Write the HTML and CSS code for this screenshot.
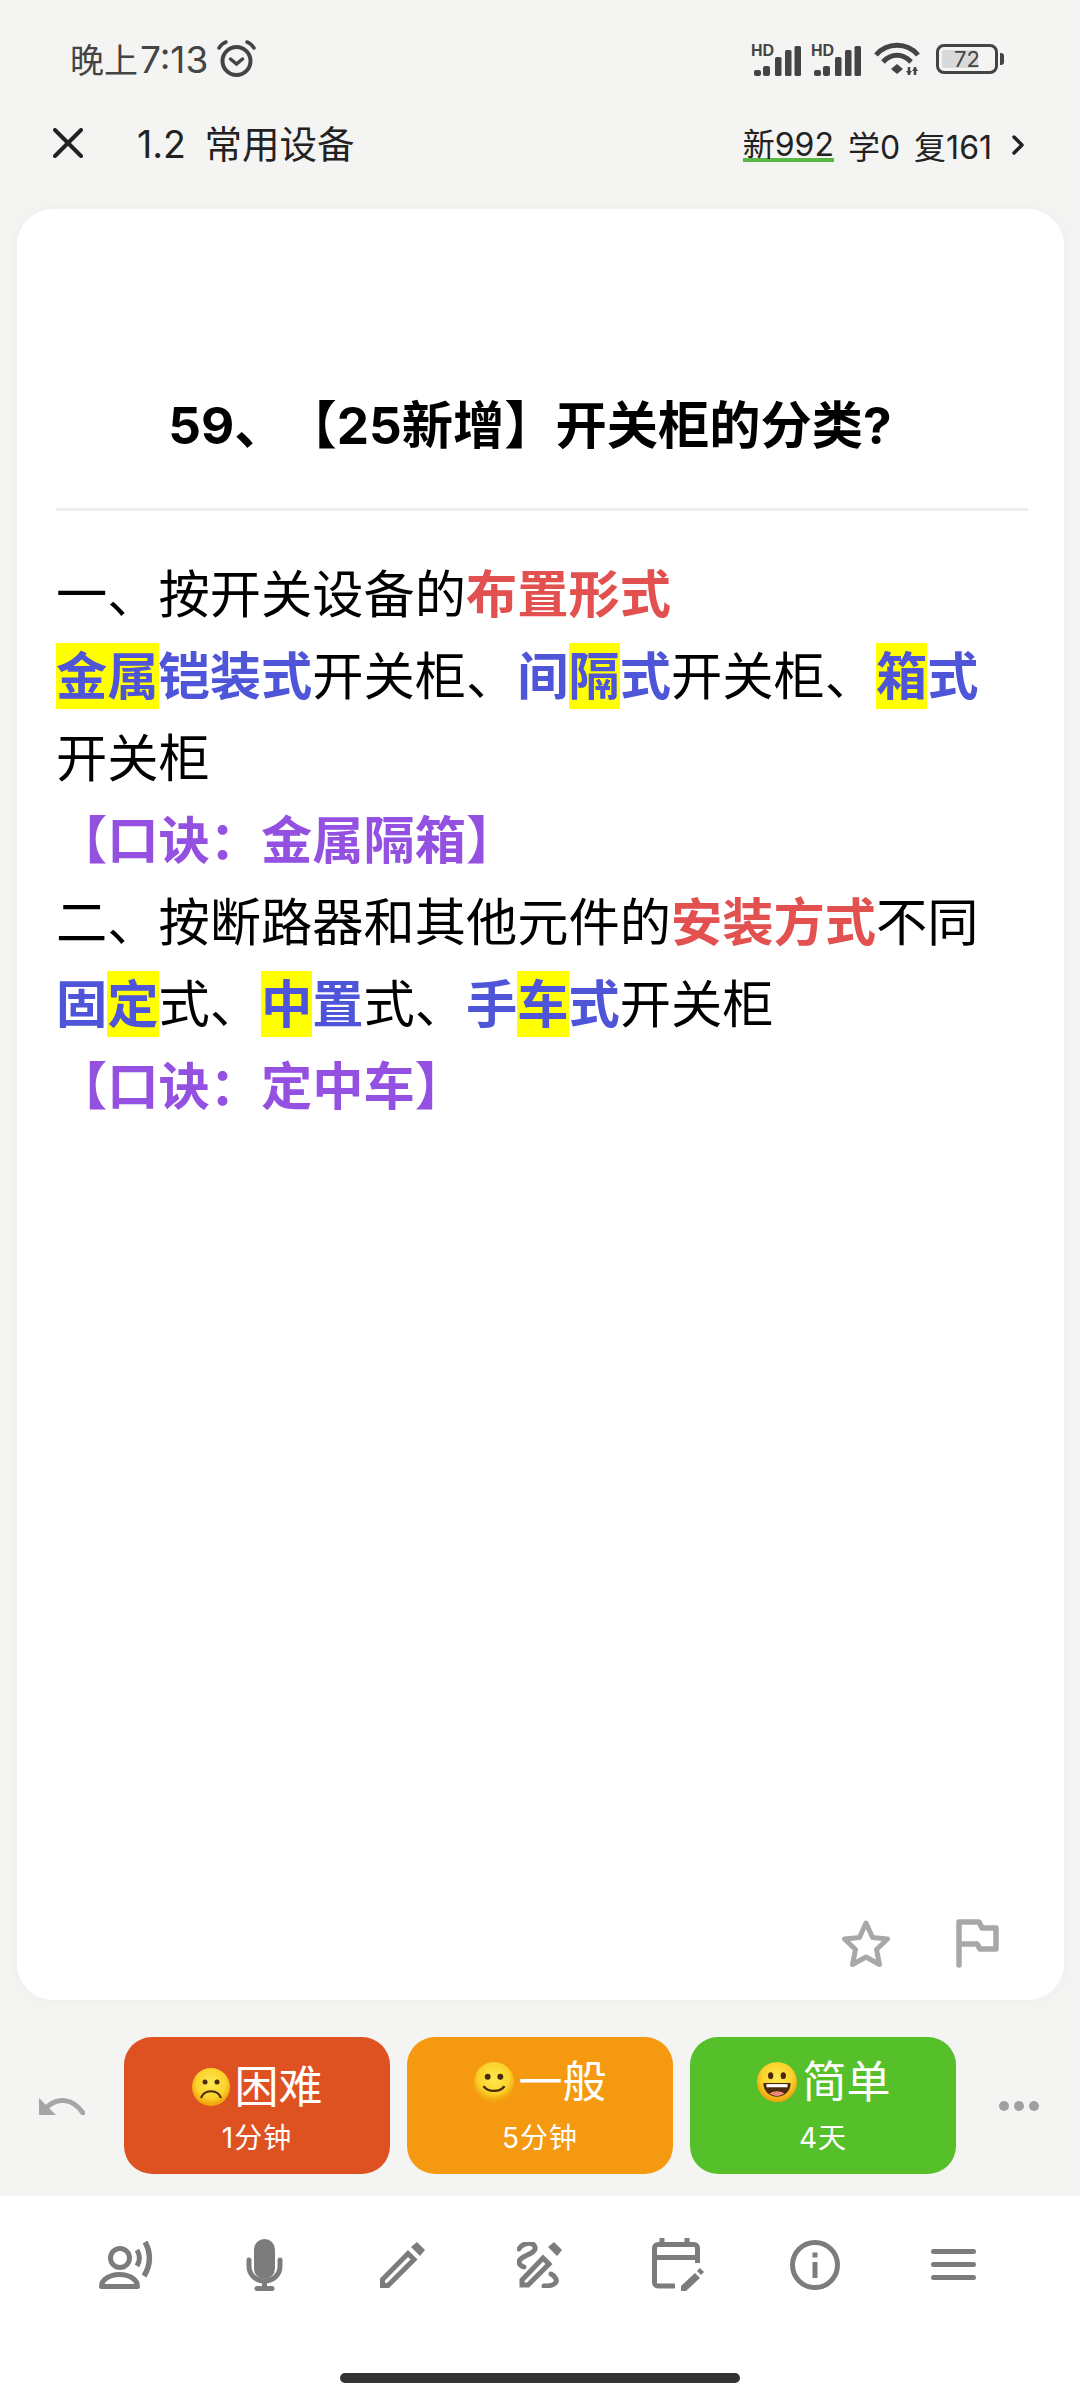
FILE: index.html
```html
<!DOCTYPE html>
<html lang="zh-CN">
<head>
    <meta charset="UTF-8">
    <meta name="viewport" content="width=device-width, initial-scale=1.0">
    <title>1.2 常用设备</title>
    <link rel="stylesheet" href="styles.css">
</head>
<body>
    <div class="status-bar">
        <div class="status-left">
            <span class="status-time">晚上<span class="status-digits">7:13</span></span>
            <svg class="alarm" width="39" height="37" viewBox="0 0 39 37" fill="none" stroke="#444" stroke-linecap="round">
                <circle cx="19.5" cy="21" r="14" stroke-width="4"/>
                <path d="M13.500 19l6 5 6-5" stroke-width="3.500"/>
                <path d="M2 8c2-3 4-5 7-6M37 8c-2-3-4-5-7-6" stroke-width="3.500"/>
            </svg>
        </div>
        <div class="status-right">
            <svg class="signal" width="50" height="40" viewBox="0 -8 50 40" fill="#444">
                <text x="0" y="12" class="hd">HD</text>
                <rect x="3" y="26" width="7" height="6" rx="2"/>
                <rect x="12" y="22" width="7" height="10" rx="2"/>
                <rect x="24" y="13" width="6.500" height="19" rx="1.500"/>
                <rect x="34" y="6" width="6.500" height="26" rx="1.500"/>
                <rect x="43.500" y="2" width="6.500" height="30" rx="1.500"/>
            </svg>
            <svg class="signal" width="50" height="40" viewBox="0 -8 50 40" fill="#444">
                <text x="0" y="12" class="hd">HD</text>
                <rect x="3" y="26" width="7" height="6" rx="2"/>
                <rect x="12" y="22" width="7" height="10" rx="2"/>
                <rect x="24" y="13" width="6.500" height="19" rx="1.500"/>
                <rect x="34" y="6" width="6.500" height="26" rx="1.500"/>
                <rect x="43.500" y="2" width="6.500" height="30" rx="1.500"/>
            </svg>
            <svg class="wifi" width="46" height="34" viewBox="0 0 46 34" fill="none" stroke="#444" stroke-width="5">
                <path d="M2 13C13 0 33 0 44 13"/>
                <path d="M9 20C17 11 29 11 37 20"/>
                <path d="M23 22l6 5-6 5-6-5z" fill="#444" stroke="none"/>
                <path d="M35 25v8M41 25v8" stroke-width="2.500"/>
                <path d="M32 29l3 4 3-4zM38 29l3-4 3 4z" fill="#444" stroke="none"/>
            </svg>
            <div class="battery">
                <div class="battery-body">
                    <div class="battery-fill"></div>
                    <span class="battery-text">72</span>
                </div>
                <div class="battery-nub"></div>
            </div>
        </div>
    </div>

    <header class="nav">
        <svg class="nav-close" width="30" height="30" viewBox="0 0 30 30" stroke="#222" stroke-width="4" stroke-linecap="round">
            <path d="M2 2l26 26M28 2L2 28"/>
        </svg>
        <h1 class="nav-title">1.2 常用设备</h1>
        <div class="nav-stats">
            <span class="stat-new">新992</span>
            <span>学0</span>
            <span>复161</span>
            <svg class="nav-more" width="12" height="20" viewBox="0 0 12 20" fill="none" stroke="#222" stroke-width="3.500" stroke-linecap="round" stroke-linejoin="round">
                <path d="M2 2l8 8-8 8"/>
            </svg>
        </div>
    </header>

    <main class="card">
        <h2 class="question">59、【25新增】开关柜的分类?</h2>
        <hr class="divider">
        <div class="answer">
            <p>一、按开关设备的<b class="red">布置形式</b></p>
            <p><b class="blue"><span class="mark">金属</span>铠装式</b>开关柜、<b class="blue">间<span class="mark">隔</span>式</b>开关柜、<b class="blue"><span class="mark">箱</span>式</b>开关柜</p>
            <p><b class="purple">【口诀：金属隔箱】</b></p>
            <p>二、按断路器和其他元件的<b class="red">安装方式</b>不同</p>
            <p><b class="blue">固<span class="mark">定</span></b>式、<b class="blue"><span class="mark">中</span>置</b>式、<b class="blue">手<span class="mark">车</span>式</b>开关柜</p>
            <p><b class="purple">【口诀：定中车】</b></p>
        </div>
        <div class="card-tools">
            <svg width="48" height="47" viewBox="0 0 48 47" fill="none" stroke="#a8a8a8" stroke-width="5" stroke-linejoin="round">
                <path d="M24 3l6.500 14.500 15 1.500-11 10.500 3 15L24 37l-13.500 7.500 3-15L2.500 19l15-1.500z"/>
            </svg>
            <svg width="43" height="49" viewBox="0 0 43 49" fill="none" stroke="#a8a8a8" stroke-width="5.500" stroke-linecap="round" stroke-linejoin="round">
                <path d="M3 46V3h20l3 6h14v21H24l-3-5H3"/>
            </svg>
        </div>
    </main>

    <section class="answer-bar">
        <svg class="undo" width="46" height="19" viewBox="0 0 46 19" fill="#a5a5a5">
            <path d="M0 2l8 17h-8z M0 19V2l17 17z" />
            <path d="M8 11C18 2 33 1 44 17" fill="none" stroke="#a5a5a5" stroke-width="5" stroke-linecap="round"/>
        </svg>
        <div class="rate-buttons">
            <button class="rate rate-hard">
                <span class="rate-label rate-label-low">
                    <svg width="38" height="38" viewBox="0 0 38 38">
                        <defs>
                            <radialGradient id="face" cx="50%" cy="40%" r="55%">
                                <stop offset="0%" stop-color="#fde84f"/>
                                <stop offset="70%" stop-color="#fbd32c"/>
                                <stop offset="100%" stop-color="#f2a60f"/>
                            </radialGradient>
                        </defs>
                        <circle cx="19" cy="19" r="19" fill="url(#face)"/>
                        <circle cx="13" cy="14" r="2.500" fill="#4a2a0a"/>
                        <circle cx="25" cy="14" r="2.500" fill="#4a2a0a"/>
                        <path d="M9 30c3-9 17-9 20 0" fill="none" stroke="#4a2a0a" stroke-width="2.200"/>
                    </svg>困难
                </span>
                <span class="rate-time">1分钟</span>
            </button>
            <button class="rate rate-normal">
                <span class="rate-label">
                    <svg width="40" height="40" viewBox="0 0 38 38">
                        <circle cx="19" cy="19" r="19" fill="url(#face)"/>
                        <circle cx="13" cy="14" r="2.800" fill="#4a2a0a"/>
                        <circle cx="25" cy="14" r="2.800" fill="#4a2a0a"/>
                        <path d="M9 23c4 6 16 6 20 0" fill="none" stroke="#4a2a0a" stroke-width="2.200"/>
                    </svg>一般
                </span>
                <span class="rate-time">5分钟</span>
            </button>
            <button class="rate rate-easy">
                <span class="rate-label">
                    <svg width="42" height="40" viewBox="0 0 38 38">
                        <circle cx="19" cy="19" r="19" fill="url(#face)"/>
                        <ellipse cx="13" cy="13" rx="2.500" ry="3.200" fill="#4a2a0a"/>
                        <ellipse cx="25" cy="13" rx="2.500" ry="3.200" fill="#4a2a0a"/>
                        <path d="M6 20h26c0 8-6 13-13 13S6 28 6 20z" fill="#4a2a0a"/>
                        <path d="M9 21h20v3H9z" fill="#fff"/>
                        <path d="M12 30c4-3 10-3 14 0-4 3-10 3-14 0z" fill="#ee8a7a"/>
                    </svg>简单
                </span>
                <span class="rate-time">4天</span>
            </button>
        </div>
        <div class="more-dots"><i></i><i></i><i></i></div>
    </section>

    <footer class="toolbar">
        <div class="tools">
            <svg width="56" height="48" viewBox="0 0 56 48" fill="none" stroke="#7c7c7c" stroke-width="5">
                <circle cx="21" cy="17" r="9.500"/>
                <path d="M2.500 45.500c0-7 8-12 18-12s18 5 18 12z" stroke-linejoin="round"/>
                <path d="M38 9c3 5 3 11 0 16"/>
                <path d="M46 1c6 10 6 23-1 34" stroke-width="5.500"/>
            </svg>
            <svg width="37" height="52" viewBox="0 0 37 52" fill="none" stroke="#7c7c7c" stroke-width="5" stroke-linecap="round">
                <rect x="8" y="0" width="21" height="40" rx="10.500" fill="#7c7c7c" stroke="none"/>
                <path d="M3 21v6c0 9 7 15 15.500 15S34 36 34 27v-6"/>
                <path d="M18.500 42v7M11 49.500h15"/>
            </svg>
            <svg width="45" height="46" viewBox="0 0 45 46" fill="none" stroke="#7c7c7c" stroke-width="5">
                <path d="M2.500 43.500v-6L28 11.500l6 6-26 26z"/>
                <path d="M37 0l8 8-5 6-9-9z" fill="#7c7c7c" stroke="none"/>
            </svg>
            <svg width="45" height="46" viewBox="0 0 45 46" fill="none" stroke="#7c7c7c" stroke-width="5">
                <path d="M5 43v-5l21-22 6 6-21 21z"/>
                <path d="M37 0l8 8-5 6-9-9z" fill="#7c7c7c" stroke="none"/>
                <path d="M2 7C5 1 16-1 18 5 20 12 2 14 2 20c0 2 2 4 5 5" stroke-linecap="round"/>
                <path d="M34 32c4 2 6 6 5 8-2 4-8 4-12 4" stroke-linecap="round"/>
            </svg>
            <svg width="52" height="54" viewBox="0 0 52 54" fill="none" stroke="#7c7c7c" stroke-width="5">
                <path d="M23 48H6a3.500 3.500 0 0 1-3.500-3.500V10A3.500 3.500 0 0 1 6 6.500h36a3.500 3.500 0 0 1 3.500 3.500v15"/>
                <path d="M3 19.500h42M10 0v7M35 0v7"/>
                <path d="M29 53v-5l14-13 5 5-14 13z" fill="#7c7c7c" stroke="none"/>
                <path d="M45 33l3-3 4 4-3 3z" fill="#7c7c7c" stroke="none"/>
            </svg>
            <svg width="50" height="50" viewBox="0 0 50 50" fill="none" stroke="#7c7c7c" stroke-width="5">
                <circle cx="25" cy="25" r="22.500"/>
                <path d="M25 22v16"/>
                <rect x="22.500" y="12.500" width="5" height="5" fill="#7c7c7c" stroke="none"/>
            </svg>
            <svg width="45" height="33" viewBox="0 0 45 33" fill="none" stroke="#7c7c7c" stroke-width="5" stroke-linecap="round">
                <path d="M2.500 2.500h40M2.500 15.500h40M2.500 28.500h40"/>
            </svg>
        </div>
        <div class="home-indicator"></div>
    </footer>
</body>
</html>
```

FILE: styles.css
```css
* {
    box-sizing: border-box;
}

html, body {
    margin: 0;
    padding: 0;
}

body {
    width: 1080px;
    height: 2400px;
    display: flex;
    flex-direction: column;
    font-family: Inter, "Noto Sans CJK SC", "Noto Sans", sans-serif;
    background-color: #f4f4f3;
    color: #000;
    overflow: hidden;
    text-spacing-trim: space-all;
}

/* status bar */
.status-bar {
    height: 84px;
    margin-top: 16px;
    padding: 0 76px 0 70px;
    display: flex;
    align-items: center;
    justify-content: space-between;
    color: #444;
}

.status-left {
    display: flex;
    align-items: center;
    gap: 9px;
}

.status-time {
    font-size: 34px;
}

.status-digits {
    font-size: 37px;
    margin-left: 2px;
}

.status-right {
    display: flex;
    align-items: center;
    margin-top: 2px;
}

.signal {
    margin: 0 10px 6px 0;
}

.hd {
    font-family: "Liberation Sans", sans-serif;
    font-size: 16px;
    font-weight: bold;
}

.wifi {
    margin: 0 16px 0 3px;
}

.battery {
    display: flex;
    align-items: center;
    gap: 2px;
}

.battery-body {
    position: relative;
    width: 62px;
    height: 30px;
    border: 3.5px solid #444;
    border-radius: 8px;
    display: flex;
    align-items: center;
    justify-content: center;
}

.battery-fill {
    position: absolute;
    left: 3px;
    top: 3px;
    bottom: 3px;
    width: 36px;
    background-color: #d9d9d9;
    border-radius: 2px;
}

.battery-text {
    position: relative;
    font-size: 22px;
    line-height: 1;
}

.battery-nub {
    width: 4px;
    height: 12px;
    background-color: #444;
    border-radius: 0 3px 3px 0;
}

/* nav */
.nav {
    height: 86px;
    margin-bottom: 23px;
    padding: 0 56px 0 53px;
    display: flex;
    align-items: center;
    color: #222;
}

.nav-title {
    margin: 0 0 3px 54px;
    font-size: 37.5px;
    font-weight: 400;
    word-spacing: 8px;
    flex: 1;
}

.nav-stats {
    display: flex;
    align-items: center;
    gap: 14px;
    font-size: 32px;
    margin-top: 4px;
}

.stat-new {
    line-height: 34px;
    background: linear-gradient(#5cb845, #5cb845) bottom / 100% 4px no-repeat;
}

.nav-more {
    margin-left: 6px;
}

/* card */
.card {
    flex: 1;
    margin: 0 16px 0 17px;
    padding: 186px 36px 32px 39px;
    display: flex;
    flex-direction: column;
    background-color: #fff;
    border-radius: 36px;
    box-shadow: 0 0 16px rgba(0, 0, 0, 0.03);
}

.question {
    margin: 0;
    padding-right: 24px;
    font-size: 51.25px;
    line-height: 60px;
    font-weight: 700;
    text-align: center;
}

.divider {
    width: 100%;
    height: 3px;
    margin: 53px 0 42px;
    border: none;
    background-color: #eeeeee;
}

.answer {
    font-size: 51.25px;
    line-height: 82px;
    padding-right: 20px;
    flex: 1;
}

.answer p {
    margin: 0;
}

.answer b {
    font-weight: 700;
}

.red {
    color: #e25050;
}

.blue {
    color: #4f55d8;
}

.purple {
    color: #9450e0;
}

.mark {
    display: inline-block;
    line-height: 66px;
    background-color: #ffff00;
}

.card-tools {
    display: flex;
    justify-content: flex-end;
    align-items: center;
    gap: 66px;
    padding-right: 29px;
}

/* answer buttons */
.answer-bar {
    height: 196px;
    padding: 37px 41px 22px 39px;
    display: flex;
    align-items: center;
}

.undo {
    display: block;
    margin-right: 39px;
}

.rate-buttons {
    display: flex;
    gap: 17px;
}

.rate {
    width: 266px;
    height: 137px;
    padding: 0;
    border: none;
    border-radius: 28px;
    color: #fff;
    font-family: inherit;
    display: flex;
    flex-direction: column;
    align-items: center;
    justify-content: flex-start;
}

.rate-hard {
    background-color: #de5222;
}

.rate-normal {
    background-color: #f59a10;
}

.rate-easy {
    background-color: #55c02a;
}

.rate-label {
    display: flex;
    align-items: center;
    gap: 5px;
    font-size: 44px;
    line-height: 50px;
    margin-top: 20px;
}

.rate-label-low {
    margin-top: 25px;
}

.rate-time {
    font-size: 28px;
    line-height: 36px;
    margin-top: 13px;
    letter-spacing: 1px;
}

.rate-hard .rate-time {
    margin-top: 8px;
}

.more-dots {
    display: flex;
    gap: 5px;
    margin-left: auto;
}

.more-dots i {
    width: 10px;
    height: 10px;
    border-radius: 50%;
    background-color: #a0a0a0;
}

/* bottom toolbar */
.toolbar {
    height: 204px;
    background-color: #fff;
    display: flex;
    flex-direction: column;
    align-items: center;
}

.tools {
    width: 964px;
    height: 138px;
    display: grid;
    grid-template-columns: repeat(7, 1fr);
    justify-items: center;
    align-items: center;
}

.home-indicator {
    width: 400px;
    height: 10px;
    margin-top: 39px;
    background-color: #333;
    border-radius: 5px;
}
```
